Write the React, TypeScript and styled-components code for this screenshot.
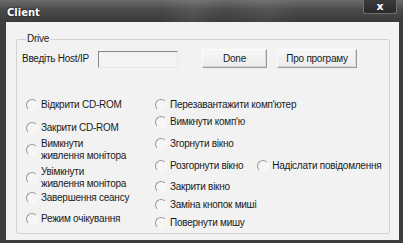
import React from "react";
import styled, { createGlobalStyle } from "styled-components";

const Global = createGlobalStyle`
  html, body { margin: 0; padding: 0; background: #ffffff; }
  body { font-family: "Liberation Sans", Arial, sans-serif; font-size: 10px; letter-spacing: -0.25px; color: #1a1a1a; }
`;

const Window = styled.div`
  width: 403px;
  height: 243px;
  display: flex;
  flex-direction: column;
  background: #3e3e3e;
  box-sizing: border-box;
  padding-bottom: 3px;
`;

const TitleBar = styled.div`
  height: 22px;
  flex: none;
  display: flex;
  justify-content: space-between;
  align-items: flex-start;
  background:
    linear-gradient(100deg, transparent 40%, rgba(255,255,255,0.07) 48%, transparent 56%, rgba(255,255,255,0.06) 66%, transparent 74%),
    linear-gradient(180deg, #6b6b6b 0%, #4a4a4a 45%, #3a3a3a 100%);
`;

const Title = styled.span`
  color: #ffffff;
  font-family: "DejaVu Sans", sans-serif;
  font-weight: bold;
  font-size: 10px;
  letter-spacing: 0;
  line-height: 12px;
  margin: 7px 0 0 7px;
  text-shadow: 0 0 2px #000;
`;

const CloseButton = styled.div`
  width: 34px;
  height: 14px;
  margin-right: 6px;
  box-sizing: border-box;
  border: 1px solid #707070;
  border-top: none;
  border-radius: 0 0 3px 3px;
  background: linear-gradient(180deg, #3a3a3a, #2a2a2a);
  display: flex;
  align-items: center;
  justify-content: center;
  color: #fff;
  font-family: "DejaVu Sans", sans-serif;
  font-weight: bold;
  font-size: 11px;
  letter-spacing: 0;
  line-height: 11px;
`;

const Frame = styled.div`
  flex: 1;
  display: flex;
  padding: 0 4px 0 6px;
  min-height: 0;
`;

const Client = styled.div`
  flex: 1;
  background: #f2f2f2;
  padding: 11px 9px 6px 10px;
  display: flex;
  flex-direction: column;
`;

const Group = styled.fieldset`
  flex: 1;
  margin: 0;
  padding: 0 0 0 5px;
  border: 1px solid #d2d2d2;
  border-radius: 2px;
  display: flex;
  flex-direction: column;
  min-width: 0;
`;

const Legend = styled.legend`
  padding: 0 1px;
  margin-left: 4px;
  line-height: 12px;
  color: #1a1a1a;
`;

const TopRow = styled.div`
  display: flex;
  align-items: center;
  margin-top: 4px;
  height: 19px;
`;

const Label = styled.span`
  white-space: nowrap;
  width: 76px;
`;

const HostInput = styled.div`
  width: 80px;
  height: 17px;
  box-sizing: border-box;
  border: 1px solid;
  border-color: #858585 #e8e8e8 #e8e8e8 #858585;
  background: #f3f3f3;
  margin-top: 2px;
`;

const Button = styled.div<{ $w: number; $ml: number }>`
  width: ${(p) => p.$w}px;
  margin-left: ${(p) => p.$ml}px;
  height: 19px;
  box-sizing: border-box;
  border: 1px solid;
  border-color: #fbfbfb #9a9a9a #9a9a9a #fbfbfb;
  box-shadow: inset -1px -1px 0 #d8d8d8;
  background: linear-gradient(180deg, #f7f7f7, #ececec);
  display: flex;
  align-items: center;
  justify-content: center;
  white-space: nowrap;
`;

const Options = styled.div`
  display: flex;
  margin-top: 31px;
  padding-left: 4px;
`;

const Column = styled.div<{ $w: number }>`
  width: ${(p) => p.$w}px;
  display: flex;
  flex-direction: column;
`;

const OptionRow = styled.div<{ $mt: number }>`
  display: flex;
  gap: 14px;
  margin-top: ${(p) => p.$mt}px;
`;

const Option = styled.div<{ $mt?: number }>`
  display: flex;
  align-items: center;
  margin-top: ${(p) => p.$mt ?? 0}px;
  line-height: 12px;
  white-space: nowrap;
`;

const Radio = styled.span`
  width: 12px;
  height: 12px;
  flex: none;
  box-sizing: border-box;
  border-radius: 50%;
  border: 1px solid;
  border-color: #999999 #f8f8f8 #f8f8f8 #999999;
  background: #f6f6f6;
  margin-right: 3px;
`;

const Text = styled.span``;

const Opt = ({ children, mt }: { children: React.ReactNode; mt?: number }) => (
  <Option $mt={mt}>
    <Radio />
    <Text>{children}</Text>
  </Option>
);

export default function App() {
  return (
    <>
      <Global />
      <Window>
        <TitleBar>
          <Title>Client</Title>
          <CloseButton>x</CloseButton>
        </TitleBar>
        <Frame>
          <Client>
            <Group>
              <Legend>Drive</Legend>
              <TopRow>
                <Label>Введіть Host/IP</Label>
                <HostInput />
                <Button $w={65} $ml={24}>Done</Button>
                <Button $w={80} $ml={10}>Про програму</Button>
              </TopRow>
              <Options>
                <Column $w={129}>
                  <Opt>Відкрити CD-ROM</Opt>
                  <Opt mt={11}>Закрити CD-ROM</Opt>
                  <Opt mt={4}>Вимкнути<br />живлення монітора</Opt>
                  <Opt mt={4}>Увімкнути<br />живлення монітора</Opt>
                  <Opt mt={2}>Завершення сеансу</Opt>
                  <Opt mt={9}>Режим очікування</Opt>
                </Column>
                <Column $w={230}>
                  <Opt>Перезавантажити комп'ютер</Opt>
                  <Opt mt={5}>Вимкнути комп'ю</Opt>
                  <Opt mt={10}>Згорнути вікно</Opt>
                  <OptionRow $mt={10}>
                    <Opt>Розгорнути вікно</Opt>
                    <Opt>Надіслати повідомлення</Opt>
                  </OptionRow>
                  <Opt mt={9}>Закрити вікно</Opt>
                  <Opt mt={6}>Заміна кнопок миші</Opt>
                  <Opt mt={6}>Повернути мишу</Opt>
                </Column>
              </Options>
            </Group>
          </Client>
        </Frame>
      </Window>
    </>
  );
}
